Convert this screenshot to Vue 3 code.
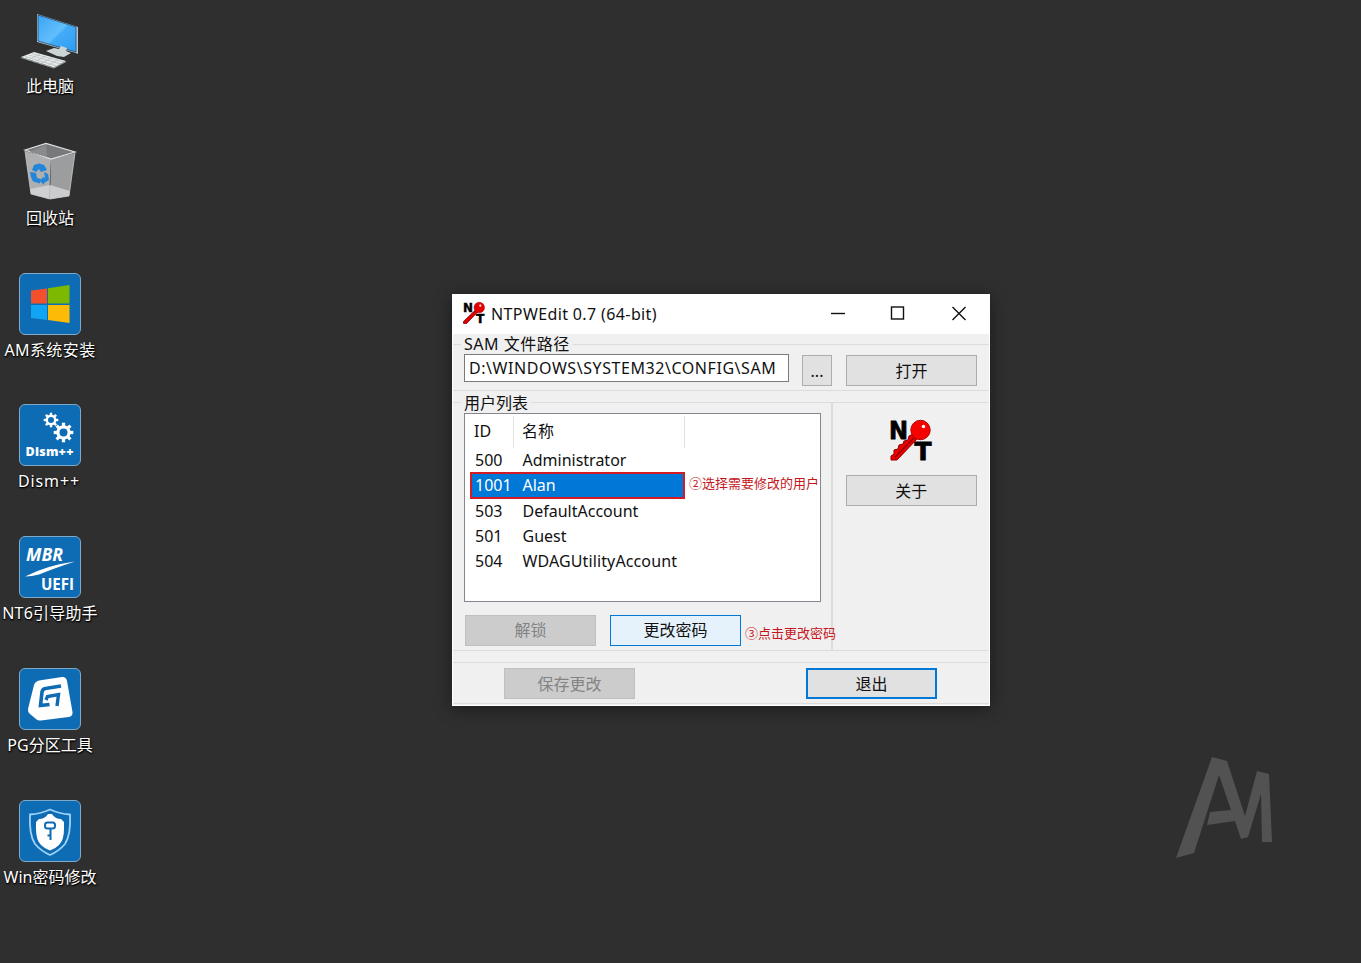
<script setup>
const shortcuts = [
  { id: 'pc', label: '此电脑' },
  { id: 'bin', label: '回收站' },
  { id: 'win', label: 'AM系统安装', tile: true },
  { id: 'dism', label: 'Dism++', tile: true },
  { id: 'mbr', label: 'NT6引导助手', tile: true },
  { id: 'pg', label: 'PG分区工具', tile: true },
  { id: 'pass', label: 'Win密码修改', tile: true }
]
const users = [
  { id: '500', name: 'Administrator' },
  { id: '1001', name: 'Alan', selected: true },
  { id: '503', name: 'DefaultAccount' },
  { id: '501', name: 'Guest' },
  { id: '504', name: 'WDAGUtilityAccount' }
]
const teeth = [0, 45, 90, 135, 180, 225, 270, 315]
</script>

<template>
  <div class="desktop">
    <nav class="shortcuts">
      <div v-for="s in shortcuts" :key="s.id" class="shortcut">
        <div class="icon" :class="{ tile: s.tile }">
          <svg v-if="s.id === 'pc'" width="62" height="62" viewBox="0 0 62 62">
            <defs>
              <linearGradient id="screen" x1="0" y1="0" x2="1" y2="1">
                <stop offset="0" stop-color="#3aa4f6" />
                <stop offset=".5" stop-color="#62bffb" />
                <stop offset=".55" stop-color="#43acf8" />
                <stop offset="1" stop-color="#2f9cf2" />
              </linearGradient>
            </defs>
            <path d="M18 5 L59 18 V45 L57 44 L18 33Z" fill="#b9c4ca" />
            <path d="M19 6 L57 18 V43 L19 32Z" fill="url(#screen)" stroke="#1d4d78" stroke-width=".8" />
            <path d="M27 42 L35 39 L40 40 L42 37 L48 39 L47 42 L52 44 L45 48 L38 47Z" fill="#ccd3d5" />
            <path d="M2 48 L15 43 L47 52 L35 58.5Z" fill="#e6e9ea" />
            <path d="M2 48 L35 58.5 L47 52 V53 L35 59.5 L2 49Z" fill="#9fa6a8" />
            <path d="M6 47.500 L38 57 M10 46 L42 55 M13 44.500 L45 53 M9 51 L21 45 M15 53 L27 47 M21 55 L33 48.500 M28 57 L39 50.500" stroke="#b4babd" stroke-width=".7" fill="none" />
          </svg>

          <svg v-else-if="s.id === 'bin'" width="62" height="62" viewBox="0 0 62 62">
            <path d="M6 10 L32 18 L30 58 L12 53Z" fill="#adafb1" />
            <path d="M32 18 L56 12 L50 55 L31 58Z" fill="#9b9d9f" />
            <path d="M11 48 L31 44 L51 50 L50 55 L31 58 L12 53Z" fill="#d7d8d9" opacity=".8" />
            <path d="M6 9 L27 2.500 L56 11 L32 18Z" fill="#77797b" stroke="#dfe1e2" stroke-width="1.200" />
            <path d="M27 4 L28 16 L10 11Z" fill="#898b8d" />
            <path d="M6 10 L12 53 L31 58 L50 55 L56 12" fill="none" stroke="#c8cacb" stroke-width=".8" />
            <g fill="#2185d8">
              <path d="M15 24 L20 22.500 L25 24 L28 29 L22 31 L20 28 L17 31 L13 29Z" />
              <path d="M11 31 L17 32 L18 37 L22 38 L21 42.500 L14 40.500 L12 36Z" />
              <path d="M25 31 L29 33 L30 39 L25 42 L25 44 L21 40 L24 36 L26 37Z" />
            </g>
          </svg>

          <svg v-else-if="s.id === 'win'" width="60" height="60" viewBox="0 0 60 60">
            <path d="M11 16.500 L27 14.500 V29.500 H11Z" fill="#f2502c" />
            <path d="M28 14.300 L49.500 11 V29.500 H28Z" fill="#7cb900" />
            <path d="M11 31 H27 V46 L11 44Z" fill="#11a4f3" />
            <path d="M28 31 H49.500 V49 L28 46Z" fill="#fdbb08" />
          </svg>

          <svg v-else-if="s.id === 'dism'" width="60" height="60" viewBox="0 0 60 60">
            <g transform="translate(31 15)">
              <circle r="4.200" fill="none" stroke="#fff" stroke-width="2.400" />
              <rect v-for="a in teeth" :key="a" x="-1.200" y="-7.300" width="2.400" height="3" fill="#fff" :transform="`rotate(${a})`" />
            </g>
            <g transform="translate(43.500 27.500)">
              <circle r="5.600" fill="none" stroke="#fff" stroke-width="3.200" />
              <rect v-for="a in teeth" :key="a" x="-1.600" y="-9.800" width="3.200" height="4" fill="#fff" :transform="`rotate(${a})`" />
            </g>
            <text x="5.500" y="51" class="heavy" font-size="12.500" textLength="48">Dism++</text>
          </svg>

          <svg v-else-if="s.id === 'mbr'" width="60" height="60" viewBox="0 0 60 60">
            <text x="6" y="23.500" class="heavy mid slant" font-size="17" textLength="37" lengthAdjust="spacingAndGlyphs">MBR</text>
            <path d="M5 39.500 Q28 28 55 24.500 Q35 31 19 37.500 Q12 39.500 5 39.500Z" fill="#fff" />
            <text x="21" y="52.500" class="heavy mid" font-size="16.500" textLength="33" lengthAdjust="spacingAndGlyphs">UEFI</text>
          </svg>

          <svg v-else-if="s.id === 'pg'" width="60" height="60" viewBox="0 0 60 60">
            <path d="M14 16 Q15 12.500 19 11.500 L42 8 Q46 7.500 47 12 L52.500 43 Q53 47.500 48.500 48 L21 51.500 Q18 52 16 50 L10 45 Q7.500 43 8 40Z" fill="#fff" />
            <path d="M41 17 L25.500 19.500 Q22.500 20 22 23 L20.500 36.500 L29.500 35.500" fill="none" stroke="#0e6cb4" stroke-width="3.600" />
            <path d="M26 31 L27.500 27.500 L38.500 25.500 L37 37" fill="none" stroke="#0e6cb4" stroke-width="3.400" />
          </svg>

          <svg v-else width="60" height="60" viewBox="0 0 60 60">
            <path d="M30 8.500 Q40 13 50 13.500 Q51 34 45 43 Q39 50 30 54 Q21 50 15 43 Q9 34 10 13.500 Q20 13 30 8.500Z" fill="none" stroke="#9fd3f7" stroke-width="1.800" />
            <path d="M19 18 Q25 18 28 13 H32 Q35 18 41 18 L44 21 V28 Q44 39 39 44 Q35 48 30 49.500 Q25 48 21 44 Q16 39 16 28 V21Z" fill="#fff" />
            <rect x="25" y="21.500" width="10" height="6" rx="2.500" fill="none" stroke="#0e6cb4" stroke-width="2" />
            <path d="M30.500 28 V39 M27.500 34.500 H30.500" stroke="#0e6cb4" stroke-width="2" fill="none" />
          </svg>
        </div>
        <span class="caption" :class="s.id">{{ s.label }}</span>
      </div>
    </nav>

    <svg class="emblem" width="100" height="104" viewBox="0 0 100 104" aria-hidden="true">
      <path d="M37 2 L52 6 L70 61 L82 16 L94 19 L97 87 H87 L86 39 L73 82 L66 84 L60 66 L32 70 L35 57 L56 55 L44 20 L19 98 L1 103Z" fill="#525252" />
    </svg>

    <section class="window">
      <header class="titlebar">
        <svg class="app-icon" width="22" height="22" viewBox="0 0 42 42">
          <text x="0" y="19" class="nt" font-size="25" textLength="19" lengthAdjust="spacingAndGlyphs">N</text>
          <text x="25" y="41" class="nt" font-size="25" textLength="16" lengthAdjust="spacingAndGlyphs">T</text>
          <path d="M24 15 L1 37 V41 H7 L28 19Z" fill="#e00000" stroke="#800000" stroke-width="1.500" />
          <circle cx="31" cy="10.500" r="10" fill="#e60000" stroke="#900000" />
          <circle cx="33" cy="7" r="2" fill="#fff" />
        </svg>
        <h1>NTPWEdit 0.7 (64-bit)</h1>
        <svg class="controls" width="136" height="16" viewBox="0 0 136 16" fill="none" stroke="#111" stroke-width="1.400">
          <path d="M0 8.500 H14" />
          <rect x="60.500" y="2" width="12" height="12" />
          <path d="M121.500 2 L134.500 15 M134.500 2 L121.500 15" />
        </svg>
      </header>

      <div class="group path-group">
        <span class="legend sam">SAM 文件路径</span>
        <div class="path-row">
          <div class="field">D:\WINDOWS\SYSTEM32\CONFIG\SAM</div>
          <button class="browse">...</button>
          <button>打开</button>
        </div>
      </div>

      <div class="group users-group">
        <div class="users-pane">
          <span class="legend">用户列表</span>
          <div class="list">
            <div class="head"><span class="col-id">ID</span><span class="col-name">名称</span></div>
            <div v-for="u in users" :key="u.id" class="row" :class="{ selected: u.selected }">
              <div class="cells"><span class="uid">{{ u.id }}</span><span :class="u.name">{{ u.name }}</span></div>
              <span v-if="u.selected" class="note">②选择需要修改的用户</span>
            </div>
          </div>
          <div class="actions">
            <button class="disabled">解锁</button>
            <button class="hot">更改密码</button>
            <span class="note">③点击更改密码</span>
          </div>
        </div>
        <aside>
          <svg class="key" width="42" height="42" viewBox="0 0 42 42">
            <text x="-1" y="20" class="nt" font-size="25.500" textLength="19" lengthAdjust="spacingAndGlyphs">N</text>
            <text x="24.500" y="41" class="nt" font-size="25.500" textLength="17" lengthAdjust="spacingAndGlyphs">T</text>
            <path d="M23 15 L19 17 L18 21 L14 22 L13 25 L9 26 L8 30 L4 31 L4 35 L1 37 V41 H7 L28 19Z" fill="#e80000" stroke="#900000" />
            <path d="M25 18 L5 38" stroke="#900000" stroke-width="1.200" />
            <circle cx="30.500" cy="11" r="9.700" fill="#f80000" stroke="#b00000" />
            <circle cx="33.500" cy="7.500" r="1.700" fill="#fff" />
          </svg>
          <button>关于</button>
        </aside>
      </div>

      <footer class="group">
        <button class="disabled">保存更改</button>
        <button class="default">退出</button>
      </footer>
    </section>
  </div>
</template>

<style>
html, body { margin: 0; background: #2f2f2f; }
</style>

<style scoped>
* { box-sizing: border-box; }
.desktop {
  position: relative;
  width: 1361px;
  height: 963px;
  overflow: hidden;
  background: #2f2f2f;
  font-family: "Noto Sans", "Noto Sans CJK SC", sans-serif;
  font-size: 16px;
  color: #111;
}
svg { display: block; flex: none; overflow: visible; }
.shortcuts { padding-top: 9.4px; width: 100px; }
.shortcut {
  height: 131.7px;
  display: flex;
  flex-direction: column;
  align-items: center;
}
.icon { width: 62px; height: 62px; flex: none; }
.tile {
  background: #0e6cb4;
  border: 1px solid #7fa9c9;
  border-radius: 6px;
}
.heavy { font-family: "Open Sans", "Noto Sans", sans-serif; font-weight: 800; fill: #fff; }
.mid { font-weight: 700; }
.slant { font-style: italic; }
.nt { font-family: "DejaVu Sans", sans-serif; font-weight: 700; fill: #000; stroke: #000; stroke-width: .8px; }
.caption {
  margin-top: 4px;
  line-height: 22px;
  white-space: nowrap;
  color: #fff;
  text-shadow: 1px 1px 2px #000, 0 1px 1px #000;
}
.caption.win { letter-spacing: .4px; }
.caption.dism { letter-spacing: .9px; margin-left: -2px; }
.caption.mbr { letter-spacing: .2px; }
.emblem { position: absolute; left: 1175px; top: 755px; }

.window {
  position: absolute;
  left: 452px;
  top: 294px;
  width: 538px;
  height: 412px;
  background: #f0f0f0;
  border: 1px solid #fff;
  border-top: 0;
  box-shadow: 0 3px 16px rgba(0, 0, 0, .45);
}
.titlebar {
  height: 40px;
  background: #fff;
  display: flex;
  align-items: center;
  padding: 0 22px 0 10px;
}
.app-icon { margin-top: -3px; }
h1 { margin: 0 auto 0 6px; font-size: 16px; font-weight: 400; line-height: 22px; letter-spacing: .38px; white-space: nowrap; }
.controls { margin-top: -2px; }
.group { border: 0 solid #dcdcdc; border-width: 1px 0; }
.legend {
  display: block;
  width: fit-content;
  height: 20px;
  line-height: 20px;
  margin-left: 8px;
  padding: 0 3px;
  background: #f0f0f0;
  white-space: nowrap;
}
.sam { letter-spacing: .5px; }
.path-group { margin-top: 10px; height: 47px; }
.path-group .legend { margin-top: -11px; }
.path-row { display: flex; padding-left: 11px; }
.field {
  width: 325px;
  height: 28px;
  border: 1px solid #7a7a7a;
  background: #fff;
  line-height: 27px;
  padding-left: 4px;
  letter-spacing: .56px;
  white-space: nowrap;
}
button {
  width: 131px;
  height: 31px;
  padding: 0;
  border: 1px solid #adadad;
  background: #e1e1e1;
  font: inherit;
  line-height: 28px;
  color: #111;
}
.path-row button { margin: 1px 0 0 14px; }
.path-row .browse { width: 30px; margin-left: 13px; line-height: 30px; }
.users-group { margin-top: 11px; height: 249px; display: flex; }
.users-pane { width: 381px; border-right: 2px solid #dcdcdc; }
.users-pane .legend { margin-top: -10px; }
.list {
  width: 357px;
  height: 189px;
  margin-left: 11px;
  border: 1px solid #828790;
  background: #fff;
  padding: 2px 0 0 5px;
}
.head { display: flex; height: 32px; line-height: 30px; }
.col-id { width: 44px; padding-left: 4px; border-right: 1px solid #e2e2e2; }
.col-name { width: 171px; padding-left: 8px; border-right: 1px solid #e2e2e2; }
.row { display: flex; align-items: center; height: 25.3px; white-space: nowrap; }
.cells { width: 215px; height: 25px; line-height: 25px; padding-left: 5px; display: flex; }
.uid { width: 47.5px; }
.WDAGUtilityAccount { letter-spacing: .12px; }
.selected .cells {
  height: 27px;
  line-height: 23px;
  padding-left: 3px;
  background: #0078d7;
  border: 2px solid #d41a22;
  color: #fff;
}
.note { font-size: 13px; line-height: 18px; color: #c4161c; white-space: nowrap; }
.row .note { margin: -5px 0 0 4px; }
.actions { display: flex; padding: 13px 0 0 12px; height: 44px; }
.actions button { line-height: 27px; }
.actions .hot { margin-left: 14px; background: #e5f1fb; border-color: #0078d7; }
.actions .note { margin: 9px -5px 0 4px; }
.disabled { background: #ccc; border-color: #bfbfbf; color: #838383; }
aside { width: 156px; padding: 16px 0 0; display: flex; flex-direction: column; align-items: center; gap: 14px; }
footer { margin-top: 11px; height: 42px; display: flex; padding: 5px 0 0 51px; }
footer .default { margin-left: 171px; border: 2px solid #0078d7; line-height: 26px; }
</style>
